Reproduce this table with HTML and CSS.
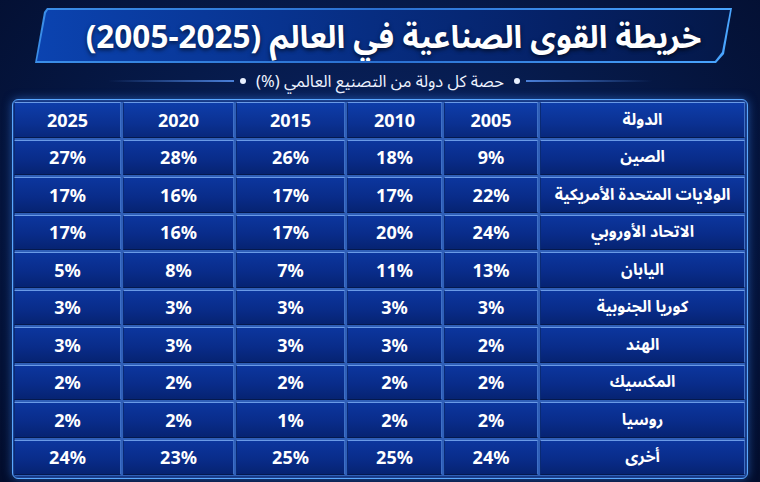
FILE: index.html
```html
<!DOCTYPE html>
<html lang="ar" dir="rtl">
<head>
<meta charset="utf-8">
<title>خريطة القوى الصناعية في العالم</title>
<link rel="stylesheet" href="styles.css">
</head>
<body>
<div class="page">
  <header class="title-frame">
    <div class="title-box">
      <h1 class="title">خريطة القوى الصناعية في العالم (2025-2005)</h1>
    </div>
  </header>
  <div class="subtitle-row">
    <span class="rule rule-right"></span>
    <span class="dot"></span>
    <span class="subtitle">حصة كل دولة من التصنيع العالمي (%)</span>
    <span class="dot"></span>
    <span class="rule rule-left"></span>
  </div>
  <div class="panel">
    <div class="grid">
      <div class="cell head name">الدولة</div><div class="cell head">2005</div><div class="cell head">2010</div><div class="cell head">2015</div><div class="cell head">2020</div><div class="cell head">2025</div>
      <div class="cell name">الصين</div><div class="cell">9%</div><div class="cell">18%</div><div class="cell">26%</div><div class="cell">28%</div><div class="cell">27%</div>
      <div class="cell name">الولايات المتحدة الأمريكية</div><div class="cell">22%</div><div class="cell">17%</div><div class="cell">17%</div><div class="cell">16%</div><div class="cell">17%</div>
      <div class="cell name">الاتحاد الأوروبي</div><div class="cell">24%</div><div class="cell">20%</div><div class="cell">17%</div><div class="cell">16%</div><div class="cell">17%</div>
      <div class="cell name">اليابان</div><div class="cell">13%</div><div class="cell">11%</div><div class="cell">7%</div><div class="cell">8%</div><div class="cell">5%</div>
      <div class="cell name">كوريا الجنوبية</div><div class="cell">3%</div><div class="cell">3%</div><div class="cell">3%</div><div class="cell">3%</div><div class="cell">3%</div>
      <div class="cell name">الهند</div><div class="cell">2%</div><div class="cell">3%</div><div class="cell">3%</div><div class="cell">3%</div><div class="cell">3%</div>
      <div class="cell name">المكسيك</div><div class="cell">2%</div><div class="cell">2%</div><div class="cell">2%</div><div class="cell">2%</div><div class="cell">2%</div>
      <div class="cell name">روسيا</div><div class="cell">2%</div><div class="cell">2%</div><div class="cell">1%</div><div class="cell">2%</div><div class="cell">2%</div>
      <div class="cell name">أخرى</div><div class="cell">24%</div><div class="cell">25%</div><div class="cell">25%</div><div class="cell">23%</div><div class="cell">24%</div>
    </div>
  </div>
</div>
</body>
</html>
```
FILE: styles.css
```css
* { box-sizing: border-box; }
html, body {
  margin: 0;
  padding: 0;
  width: 760px;
  height: 482px;
  overflow: hidden;
}
body {
  background: radial-gradient(ellipse at 50% 40%, #0a2464 0%, #061a4a 45%, #030d2c 100%);
  font-family: "Noto Sans", "Noto Sans Arabic", "DejaVu Sans", sans-serif;
  color: #ffffff;
}
.page {
  width: 760px;
  height: 482px;
  padding-top: 8px;
  display: flex;
  flex-direction: column;
}
.title-frame {
  margin-right: 28px;
  margin-left: 35px;
  height: 55px;
  padding: 2px;
  background: linear-gradient(90deg, #3b8ee8 0%, #2a6fd0 50%, #4aa6ff 100%);
  clip-path: polygon(12px 0, 100% 0, calc(100% - 8px) calc(100% - 9px), calc(100% - 16px) 100%, 0 100%, 9px 4px);
}
.title-box {
  height: 100%;
  background: linear-gradient(90deg, #0b43b0 0%, #08338f 35%, #052166 75%, #041848 100%);
  clip-path: polygon(11px 0, 100% 0, calc(100% - 8px) calc(100% - 9px), calc(100% - 15px) 100%, 0 100%, 9px 3px);
  display: flex;
  align-items: center;
  justify-content: center;
}
.title {
  margin: 0;
  font-size: 31.5px;
  font-weight: 700;
  line-height: 1;
  padding-left: 20px;
  text-shadow: 0 2px 4px rgba(0, 0, 0, 0.6);
  white-space: nowrap;
}
.subtitle-row {
  height: 36px;
  display: flex;
  align-items: center;
  justify-content: center;
  gap: 6px;
}
.rule {
  width: 126px;
  height: 2px;
}
.rule-right { background: linear-gradient(90deg, #4a7fd8 0%, rgba(74, 127, 216, 0) 100%); }
.rule-left { background: linear-gradient(270deg, #4a7fd8 0%, rgba(74, 127, 216, 0) 100%); }
.dot {
  width: 6px;
  height: 6px;
  border-radius: 50%;
  background: #e8f0ff;
}
.subtitle {
  font-size: 16.5px;
  color: #eef3ff;
  padding: 0 4px;
}
.panel {
  margin: 0 12px 0 12px;
  height: 380px;
  padding: 2px;
  border: 1px solid #5aa8ff;
  border-radius: 6px;
  background: #0b2b78;
  box-shadow: 0 0 10px rgba(60, 140, 255, 0.5), inset 0 0 4px rgba(120, 180, 255, 0.4);
}
.grid {
  display: grid;
  grid-template-columns: 205px 94px 95px 109px 111px 107px;
  grid-template-rows: repeat(10, 35.5px);
  gap: 2px;
  background: #2f5fb8;
  height: 100%;
}
.cell {
  background: linear-gradient(180deg, #0c369e 0%, #092c8a 55%, #062372 100%);
  border-top: 1px solid #6a9ae6;
  border-right: 1px solid #3e70c6;
  border-bottom: 1px solid #04194f;
  border-left: 1px solid #0a2a74;
  display: flex;
  align-items: center;
  justify-content: center;
  font-size: 18px;
  font-weight: 700;
  color: #ffffff;
  white-space: nowrap;
}
.name {
  font-size: 16px;
}
.head {
  background: linear-gradient(180deg, #0e3daa 0%, #0b3192 60%, #08287c 100%);
}
```
